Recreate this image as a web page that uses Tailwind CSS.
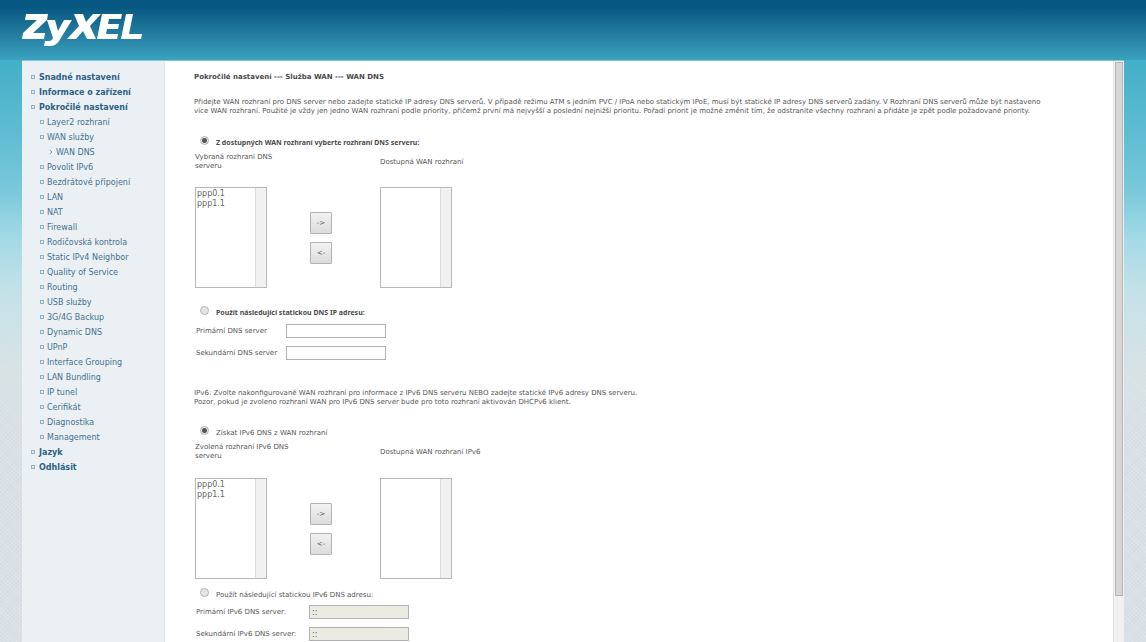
<!DOCTYPE html>
<html lang="cs">
<head>
<meta charset="utf-8">
<title>ZyXEL - WAN DNS</title>
<script src="https://cdn.jsdelivr.net/npm/@tailwindcss/browser@4"></script>
</head>
<body class="flex h-screen flex-col overflow-hidden bg-[#d8dfe5] font-['DejaVu_Sans',sans-serif] text-[7px] leading-[9px] text-[#555]">
<header class="flex h-[60px] shrink-0 items-start bg-linear-to-b from-[#055680] from-10% to-[#3ba2bf] px-[22px] pt-[13px]">
  <svg class="h-[34px] w-[121px]" viewBox="0 0 121 34" fill="#fff" role="img" aria-label="ZyXEL">
    <path d="M4 1H26L25 7L11 20H23L22 26H0L1 20L15 7H3Z"/>
    <path d="M25 7H33L36 18L42 7H50L37 28Q34 33 28 33H22L23 28H27Q30 28 31 25Z"/>
    <path d="M52 1H61L64 9L71 1H79L68 13L74 26H65L61 18L54 26H45L57 13Z"/>
    <path d="M80 1H100L99 6H87L86 11H97L96 16H85L84 21H96L95 26H75Z"/>
    <path d="M104 1H111L107 21H120L119 26H99Z"/>
  </svg>
</header>
<div class="flex min-h-0 flex-1 bg-[linear-gradient(#42afc8,#5dbcd2_12%,#78c8da_22%,#a5dae6_31%,#c2e2e8e0_40%,#d8e5e580_54%,#d8dfe500_68%),repeating-linear-gradient(45deg,#ffffff2c_0_1px,transparent_1px_3px),repeating-linear-gradient(-45deg,#c8d2e040_0_1px,transparent_1px_3px)] px-[22px]">
  <div class="flex min-w-0 flex-1 border-t border-[#86c5d7] bg-white">
    <nav id="menu" class="w-[143px] shrink-0 border-r border-[#dfe6ea] bg-[#ebf0f4] pt-[9px] text-[8px] leading-[15px] text-[#44718f]"></nav>
    <main class="min-w-0 flex-1 pt-[11px] pl-[29px] pr-[30px]">
      <h1 class="font-bold leading-[10px] text-[#4a4a4a]">Pokročilé nastavení --- Služba WAN --- WAN DNS</h1>
      <p class="mt-4">Přidejte WAN rozhraní pro DNS server nebo zadejte statické IP adresy DNS serverů. V případě režimu ATM s jedním PVC / IPoA nebo statickým IPoE, musí být statické IP adresy DNS serverů zadány. V Rozhraní DNS serverů může být nastaveno<br>více WAN rozhraní. Použité je vždy jen jedno WAN rozhraní podle priority, přičemž první má nejvyšší a poslední nejnižší prioritu. Pořadí priorit je možné změnit tím, že odstraníte všechny rozhraní a přidáte je zpět podle požadované priority.</p>

      <div class="mt-5 flex h-[9px] items-start pl-[6px]">
        <input id="r1" type="radio" name="v4" checked class="size-[9px] appearance-none rounded-full border border-[#b5b5b5] bg-[#ececec] checked:bg-[radial-gradient(circle,#555_0_2px,#e6e6e6_3px)]">
        <label for="r1" class="pt-[2px] pl-[7px] font-['Noto_Sans',sans-serif] font-bold text-[#4a4a4a]">Z dostupných WAN rozhraní vyberte rozhraní DNS serveru:</label>
      </div>
      <div class="mt-2 flex items-center pl-px">
        <label for="s1" class="w-[185px] pr-[80px]">Vybraná rozhraní DNS serveru</label>
        <label for="s2">Dostupná WAN rozhraní</label>
      </div>
      <div class="mt-4 flex items-start pl-px">
        <div class="flex h-[101px] w-[72px] border border-[#b8b8b8]">
          <select id="s1" multiple class="min-w-0 flex-1 appearance-none overflow-hidden bg-white pt-px text-[8px] text-[#666]"><option class="h-[10px] min-h-0 px-px py-0 leading-[10px]">ppp0.1</option><option class="h-[10px] min-h-0 px-px py-0 leading-[10px]">ppp1.1</option></select>
          <div class="w-[11px] border-l border-[#dcdcdc] bg-[#f1f1f1]"></div>
        </div>
        <div class="flex w-[113px] flex-col items-start gap-2 pt-[25px] pl-[43px]">
          <button type="button" class="size-[22px] rounded-[1px] border border-[#b3b3b3] bg-linear-to-b from-[#f2f2f2] to-[#dcdcdc]">-&gt;</button>
          <button type="button" class="size-[22px] rounded-[1px] border border-[#b3b3b3] bg-linear-to-b from-[#f2f2f2] to-[#dcdcdc]">&lt;-</button>
        </div>
        <div class="flex h-[101px] w-[72px] border border-[#b8b8b8]">
          <select id="s2" multiple class="min-w-0 flex-1 appearance-none overflow-hidden bg-white text-[8px]"></select>
          <div class="w-[11px] border-l border-[#dcdcdc] bg-[#f1f1f1]"></div>
        </div>
      </div>
      <div class="mt-[18px] flex h-[9px] items-start pl-[6px]">
        <input id="r2" type="radio" name="v4" class="size-[9px] appearance-none rounded-full border border-[#b5b5b5] bg-[#e4e4e4]">
        <label for="r2" class="pt-[2px] pl-[7px] font-['Noto_Sans',sans-serif] font-bold text-[#4a4a4a]">Použít následující statickou DNS IP adresu:</label>
      </div>
      <div class="mt-[9px] grid grid-cols-[89px_100px] items-center gap-x-px gap-y-2 pl-[2px]">
        <label for="i1">Primární DNS server</label>
        <input id="i1" type="text" class="h-[14px] border border-[#b0b0b0] bg-white px-[2px] text-[8px]">
        <label for="i2">Sekundární DNS server</label>
        <input id="i2" type="text" class="h-[14px] border border-[#b0b0b0] bg-white px-[2px] text-[8px]">
      </div>

      <p class="mt-[29px]">IPv6: Zvolte nakonfigurované WAN rozhraní pro informace z IPv6 DNS serveru NEBO zadejte statické IPv6 adresy DNS serveru.<br>Pozor, pokud je zvoleno rozhraní WAN pro IPv6 DNS server bude pro toto rozhraní aktivován DHCPv6 klient.</p>

      <div class="mt-[19px] flex h-[9px] items-start pl-[6px]">
        <input id="r3" type="radio" name="v6" checked class="size-[9px] appearance-none rounded-full border border-[#b5b5b5] bg-[#ececec] checked:bg-[radial-gradient(circle,#555_0_2px,#e6e6e6_3px)]">
        <label for="r3" class="pt-[3px] pl-[7px]">Získat IPv6 DNS z WAN rozhraní</label>
      </div>
      <div class="mt-2 flex items-center pl-px">
        <label for="s3" class="w-[185px] pr-[80px]">Zvolená rozhraní IPv6 DNS serveru</label>
        <label for="s4">Dostupná WAN rozhraní IPv6</label>
      </div>
      <div class="mt-[17px] flex items-start pl-px">
        <div class="flex h-[101px] w-[72px] border border-[#b8b8b8]">
          <select id="s3" multiple class="min-w-0 flex-1 appearance-none overflow-hidden bg-white pt-px text-[8px] text-[#666]"><option class="h-[10px] min-h-0 px-px py-0 leading-[10px]">ppp0.1</option><option class="h-[10px] min-h-0 px-px py-0 leading-[10px]">ppp1.1</option></select>
          <div class="w-[11px] border-l border-[#dcdcdc] bg-[#f1f1f1]"></div>
        </div>
        <div class="flex w-[113px] flex-col items-start gap-2 pt-[25px] pl-[43px]">
          <button type="button" class="size-[22px] rounded-[1px] border border-[#b3b3b3] bg-linear-to-b from-[#f2f2f2] to-[#dcdcdc]">-&gt;</button>
          <button type="button" class="size-[22px] rounded-[1px] border border-[#b3b3b3] bg-linear-to-b from-[#f2f2f2] to-[#dcdcdc]">&lt;-</button>
        </div>
        <div class="flex h-[101px] w-[72px] border border-[#b8b8b8]">
          <select id="s4" multiple class="min-w-0 flex-1 appearance-none overflow-hidden bg-white text-[8px]"></select>
          <div class="w-[11px] border-l border-[#dcdcdc] bg-[#f1f1f1]"></div>
        </div>
      </div>
      <div class="mt-[9px] flex h-[9px] items-start pl-[6px]">
        <input id="r4" type="radio" name="v6" class="size-[9px] appearance-none rounded-full border border-[#b5b5b5] bg-[#e4e4e4]">
        <label for="r4" class="pt-[3px] pl-[7px]">Použít následující statickou IPv6 DNS adresu:</label>
      </div>
      <div class="mt-2 grid grid-cols-[112px_100px] items-center gap-x-px gap-y-2 pl-[2px]">
        <label for="i3">Primární IPv6 DNS server:</label>
        <input id="i3" type="text" value="::" disabled class="h-[14px] border border-[#b3b3b3] bg-[#ebebe4] px-[2px] text-[8px]">
        <label for="i4">Sekundární IPv6 DNS server:</label>
        <input id="i4" type="text" value="::" disabled class="h-[14px] border border-[#b3b3b3] bg-[#ebebe4] px-[2px] text-[8px]">
      </div>
    </main>
    <div class="w-[11px] shrink-0 border-l border-[#e2e2e2] bg-[#f1f1f1] px-px pt-px">
      <div class="h-[92%] border border-[#b5b5b5] bg-[#d6d6d6]"></div>
    </div>
  </div>
</div>
<script>
const items = [[0,'Snadné nastavení'],[0,'Informace o zařízení'],[0,'Pokročilé nastavení'],[1,'Layer2 rozhraní'],[1,'WAN služby'],[2,'WAN DNS'],[1,'Povolit IPv6'],[1,'Bezdrátové připojení'],[1,'LAN'],[1,'NAT'],[1,'Firewall'],[1,'Rodičovská kontrola'],[1,'Static IPv4 Neighbor'],[1,'Quality of Service'],[1,'Routing'],[1,'USB služby'],[1,'3G/4G Backup'],[1,'Dynamic DNS'],[1,'UPnP'],[1,'Interface Grouping'],[1,'LAN Bundling'],[1,'IP tunel'],[1,'Cerifikát'],[1,'Diagnostika'],[1,'Management'],[0,'Jazyk'],[0,'Odhlásit']];
const rows = ['pl-[9px] gap-1 font-bold text-[#2d6187]', 'pl-[18px] gap-[3px]', 'pl-[27px] gap-[3px]'];
const square = '<svg class="mb-[2px] size-1 shrink-0" viewBox="0 0 4 4" aria-hidden="true"><rect x=".5" y=".5" width="3" height="3" fill="#dfecf2" stroke="#8fb2c6"/></svg>';
const arrow = '<svg class="mb-[2px] size-1 shrink-0" viewBox="0 0 4 4" aria-hidden="true"><path d="M.8 0L2.8 2L.8 4" fill="none" stroke="#6f98b0"/></svg>';
document.getElementById('menu').innerHTML = items.map(([l, t]) => `<a href="#" class="flex items-center ${rows[l]}">${l === 2 ? arrow : square}<span>${t}</span></a>`).join('');
</script>
</body>
</html>
